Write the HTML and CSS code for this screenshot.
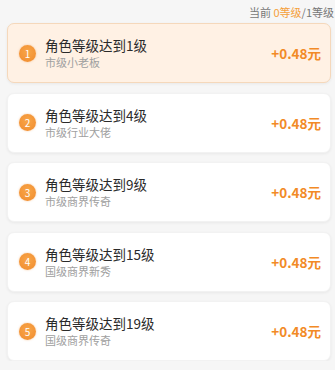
FILE: index.html
```html
<!DOCTYPE html>
<html lang="zh">
<head>
<meta charset="utf-8">
<link rel="stylesheet" href="styles.css">
</head>
<body>
<div class="page">
  <div class="status">当前 <span class="hl">0等级</span>/1等级</div>
  <div class="list">
    <div class="card active">
      <span class="badge">1</span>
      <div class="info"><div class="title">角色等级达到1级</div><div class="sub">市级小老板</div></div>
      <div class="amount">+0.48元</div>
    </div>
    <div class="card">
      <span class="badge">2</span>
      <div class="info"><div class="title">角色等级达到4级</div><div class="sub">市级行业大佬</div></div>
      <div class="amount">+0.48元</div>
    </div>
    <div class="card">
      <span class="badge">3</span>
      <div class="info"><div class="title">角色等级达到9级</div><div class="sub">市级商界传奇</div></div>
      <div class="amount">+0.48元</div>
    </div>
    <div class="card">
      <span class="badge">4</span>
      <div class="info"><div class="title">角色等级达到15级</div><div class="sub">国级商界新秀</div></div>
      <div class="amount">+0.48元</div>
    </div>
    <div class="card">
      <span class="badge">5</span>
      <div class="info"><div class="title">角色等级达到19级</div><div class="sub">国级商界传奇</div></div>
      <div class="amount">+0.48元</div>
    </div>
  </div>
</div>
</body>
</html>
```
FILE: styles.css
```css
html, body {
  margin: 0;
  padding: 0;
  background: #f6f6f6;
  font-family: "Noto Sans CJK SC", "Noto Sans", sans-serif;
}
.page {
  padding: 4px 4px 0 7px;
}
.status {
  text-align: right;
  font-size: 11px;
  line-height: 16px;
  color: #777;
  margin-right: -3px;
  height: 19px;
}
.hl { color: #f5a03a; }
.list {
  display: flex;
  flex-direction: column;
  gap: 9.5px;
}
.card {
  height: 60px;
  box-sizing: border-box;
  background: #fff;
  border-radius: 7px;
  box-shadow: 0 1px 3px rgba(0,0,0,0.06);
  display: flex;
  align-items: center;
  padding: 0 9px 0 11px;
  border: 1px solid #f2f2f2;
}
.card.active {
  background: #fff1e4;
  border: 1px solid #f5d8bb;
}
.badge {
  width: 17px;
  height: 17px;
  border-radius: 50%;
  background: radial-gradient(circle at 50% 40%, #f8a649, #f08a2c);
  box-shadow: 0 0 2px rgba(240,138,44,0.5);
  color: #fff;
  font-size: 10px;
  line-height: 17px;
  text-align: center;
  flex: none;
}
.info {
  flex: 1;
  margin-left: 9px;
}
.title {
  font-size: 13.5px;
  line-height: 18px;
  color: #2a2a2a;
}
.sub {
  font-size: 11px;
  line-height: 15px;
  color: #a0a0a0;
  margin-top: 1px;
}
.amount {
  font-size: 13.5px;
  font-weight: bold;
  color: #f28a26;
}
```
